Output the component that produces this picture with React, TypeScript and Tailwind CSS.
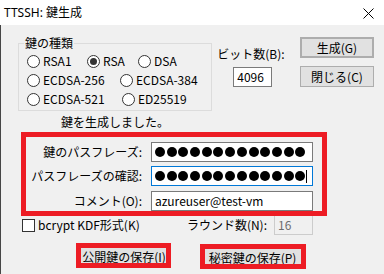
import React from "react";

function Radio({ label, checked = false, width }: { label: string; checked?: boolean; width?: string }) {
  return (
    <div className={`flex items-center gap-[3px] ${width ?? ""}`}>
      <span className="flex h-[13px] w-[13px] items-center justify-center rounded-full border border-[#333333] bg-white">
        {checked && <span className="h-[7px] w-[7px] rounded-full bg-[#333333]" />}
      </span>
      <span>{label}</span>
    </div>
  );
}

function Dots({ count }: { count: number }) {
  return (
    <div className="flex gap-[1.7px]">
      {Array.from({ length: count }).map((_, i) => (
        <span key={i} className="h-[10px] w-[10px] rounded-full bg-black" />
      ))}
    </div>
  );
}

function WinButton({ children, className = "" }: { children: React.ReactNode; className?: string }) {
  return (
    <div
      className={`flex items-center justify-center whitespace-nowrap border border-[#adadad] bg-[#e1e1e1] text-black ${className}`}
    >
      {children}
    </div>
  );
}

export default function App() {
  return (
    <div className="relative flex h-[274px] w-[384px] flex-col overflow-hidden bg-[#f0f0f0] font-['Noto_Sans_CJK_JP',sans-serif] text-[12px] leading-[14px] text-black">
      {/* title bar */}
      <div className="flex h-[25px] shrink-0 items-center justify-between bg-white pl-[4px] pr-[10px]">
        <span className="font-['Noto_Sans','Noto_Sans_CJK_JP',sans-serif] text-[12px]">TTSSH: 鍵生成</span>
        <svg width="11" height="11" viewBox="0 0 11 11" className="mt-[2px]">
          <path d="M0.5 0.5 L10.5 10.5 M10.5 0.5 L0.5 10.5" stroke="#000" strokeWidth="1" />
        </svg>
      </div>

      <div className="flex flex-1 flex-col border-l border-[#464646] pl-[17px] pr-[10px]">
        {/* top section */}
        <div className="flex items-start pt-[12px]">
          <div className="relative mt-[6px] h-[68px] w-[195px] border border-[#dcdcdc]">
            <span className="absolute left-[5px] top-[-8px] bg-[#f0f0f0] px-[1px]">鍵の種類</span>
            <div className="flex flex-col gap-[5px] pl-[8px] pt-[10px]">
              <div className="flex h-[14px] items-center">
                <Radio label="RSA1" width="w-[60px]" />
                <Radio label="RSA" checked width="w-[51px]" />
                <Radio label="DSA" />
              </div>
              <div className="flex h-[14px] items-center">
                <Radio label="ECDSA-256" width="w-[93px]" />
                <Radio label="ECDSA-384" />
              </div>
              <div className="flex h-[14px] items-center">
                <Radio label="ECDSA-521" width="w-[95px]" />
                <Radio label="ED25519" />
              </div>
            </div>
          </div>

          <div className="ml-[5px] flex w-[83px] flex-col pt-[10px]">
            <span>ビット数(B):</span>
            <div className="ml-[16px] mt-[6px] flex h-[20px] w-[39px] items-center border border-[#7a7a7a] bg-white pl-[3px]">
              4096
            </div>
          </div>

          <div className="flex flex-col gap-[8px]">
            <WinButton className="h-[21px] w-[74px] border-2 border-[#0078d7]">生成(G)</WinButton>
            <WinButton className="h-[21px] w-[74px]">閉じる(C)</WinButton>
          </div>
        </div>

        <div className="ml-[43px] mt-[4px]">鍵を生成しました。</div>

        {/* passphrase rows */}
        <div className="mt-[13px] flex flex-col">
          <div className="flex items-center">
            <span className="w-[124px] text-right">鍵のパスフレーズ:</span>
            <div className="ml-[9px] flex h-[20px] w-[162px] items-center border border-[#7a7a7a] bg-white pl-[3px]">
              <Dots count={13} />
            </div>
          </div>
          <div className="mt-[4px] flex items-center">
            <span className="w-[124px] text-right">パスフレーズの確認:</span>
            <div className="ml-[9px] flex h-[20px] w-[162px] items-center border border-[#0078d7] bg-white pl-[3px]">
              <Dots count={13} />
              <span className="ml-[1px] h-[13px] w-[1px] bg-black" />
            </div>
          </div>
          <div className="mt-[5px] flex items-center">
            <span className="w-[124px] text-right">コメント(O):</span>
            <div className="ml-[9px] flex h-[20px] w-[162px] items-center border border-[#7a7a7a] bg-white pl-[3px]">
              azureuser@test-vm
            </div>
          </div>
        </div>

        {/* bcrypt row */}
        <div className="mt-[4px] flex w-[295px] items-center">
          <span className="ml-[4px] h-[13px] w-[13px] border border-[#333333] bg-white" />
          <span className="ml-[3px]">bcrypt KDF形式(K)</span>
          <div className="ml-auto flex items-center gap-[7px]">
            <span>ラウンド数(N):</span>
            <div className="flex h-[20px] w-[39px] items-center border border-[#cccccc] bg-[#f0f0f0] pl-[3px] text-[#6d6d6d]">
              16
            </div>
          </div>
        </div>

        {/* save buttons */}
        <div className="mt-[11px] flex">
          <WinButton className="ml-[60px] h-[22px] w-[92px]">公開鍵の保存(I)</WinButton>
          <WinButton className="ml-[33px] mt-[1px] h-[22px] w-[99px]">秘密鍵の保存(P)</WinButton>
        </div>
      </div>

      {/* red annotation boxes */}
      <div className="absolute left-[21px] top-[132px] h-[84px] w-[306px] border-[5px] border-[#ed1c24]" />
      <div className="absolute left-[76px] top-[243px] h-[25px] w-[95px] border-[5px] border-[#ed1c24]" />
      <div className="absolute left-[200px] top-[244px] h-[25px] w-[106px] border-[5px] border-[#ed1c24]" />
    </div>
  );
}
